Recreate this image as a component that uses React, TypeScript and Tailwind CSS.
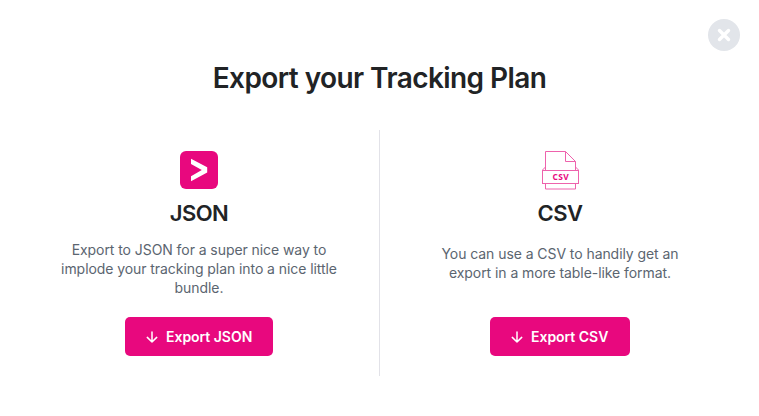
import type { ReactNode } from "react";

function JsonIcon() {
  return (
    <svg width="38" height="38" viewBox="0 0 38 38" className="block">
      <rect width="38" height="38" rx="6" fill="#e8087e" />
      <path d="M11 7.8 L27.2 16.2 V21.4 L11 30.2 V25.3 L21.8 18.9 L11 12.9 Z" fill="#fff" />
    </svg>
  );
}

function CsvIcon() {
  return (
    <svg width="38" height="39" viewBox="0 0 38 39" className="block" fill="none" stroke="#ee62ac" strokeWidth="1">
      <path d="M4.5 19.5 V0.5 H24.5 L34.5 10.5 V19.5" />
      <path d="M24.5 0.5 V10.5 H34.5" />
      <path d="M4.5 16 L1.5 19 M34.5 16 L37.5 19" />
      <rect x="1.5" y="19.5" width="36" height="13" />
      <path d="M4.5 32.5 V38 H34.5 V32.5" />
      <text x="19.9" y="29" textAnchor="middle" stroke="none" fill="#e8087e" fontSize="8.4" fontWeight="700" letterSpacing="0.4" fontFamily="'Open Sans', sans-serif">
        CSV
      </text>
    </svg>
  );
}

function DownArrow() {
  return (
    <svg width="12" height="12" viewBox="0 0 12 12" className="block" fill="none" stroke="#fff" strokeWidth="1.5" strokeLinecap="round" strokeLinejoin="round">
      <path d="M6 0.9 V11 M1.3 6.4 L6 11 L10.7 6.4" />
    </svg>
  );
}

function ExportOption({ icon, title, text, action, width, textSpacing }: { icon: ReactNode; title: string; text: ReactNode; action: string; width: string; textSpacing: string }) {
  return (
    <section className="flex h-[247px] w-[360px] flex-col items-center pt-[22px]">
      <div className="h-[38px]">{icon}</div>
      <h2 className="mt-[9px] text-[22px] leading-[30px] font-semibold tracking-[-0.5px] text-[#212325]">{title}</h2>
      <div className={`mt-3 h-[57px] text-center text-[14px] leading-[19px] tracking-[-0.07px] whitespace-nowrap text-[#5b6570] ${textSpacing}`}>
        <p>{text}</p>
      </div>
      <button className={`mt-5 flex h-[39px] items-center gap-2 rounded-[5px] bg-[#e8087e] pl-[21px] text-[14px] font-semibold tracking-[-0.03px] whitespace-nowrap text-white ${width}`}>
        <DownArrow />
        {action}
      </button>
    </section>
  );
}

export default function App() {
  return (
    <main className="h-[416px] w-[759px] overflow-hidden bg-white px-[19px] font-['Inter',sans-serif]">
      <header className="flex h-[51px] items-end justify-end">
        <button aria-label="Close" className="flex size-8 items-center justify-center rounded-full bg-[#e2e5ea]">
          <svg width="14" height="14" viewBox="0 0 14 14" stroke="#fff" strokeWidth="3.4" strokeLinecap="round">
            <path d="M2.5 2.5 L11.5 11.5 M11.5 2.5 L2.5 11.5" />
          </svg>
        </button>
      </header>
      <h1 className="mt-[9px] text-center text-[28px] leading-[36px] font-semibold tracking-[-0.58px] text-[#212325]">Export your Tracking Plan</h1>
      <div className="mt-[33px] flex">
        <ExportOption
          icon={<JsonIcon />}
          title="JSON"
          text={<>Export to JSON for a super nice way to<br />implode your tracking plan into a nice little<br />bundle.</>}
          action="Export JSON"
          width="w-[148px]"
          textSpacing="pt-0"
        />
        <div className="mt-px h-[246px] w-px bg-[#e2e2e8]" />
        <ExportOption
          icon={<CsvIcon />}
          title="CSV"
          text={<>You can use a CSV to handily get an<br />export in a more table-like format.</>}
          action="Export CSV"
          width="w-[140px]"
          textSpacing="pt-1"
        />
      </div>
    </main>
  );
}
